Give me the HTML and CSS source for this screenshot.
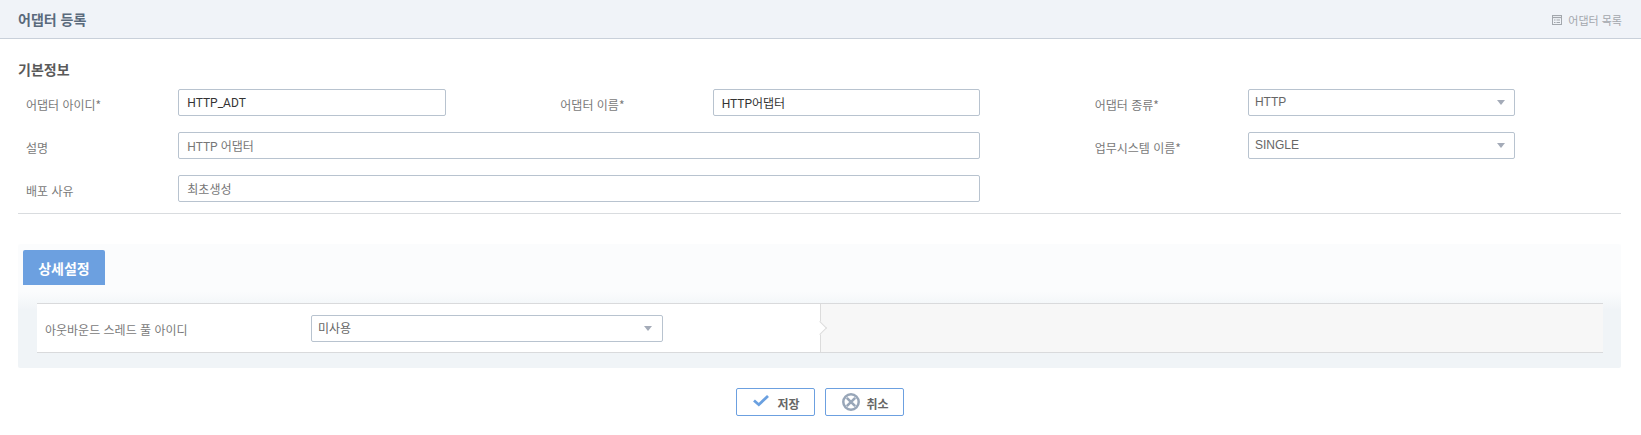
FILE: index.html
```html
<!DOCTYPE html>
<html lang="ko">
<head>
<meta charset="utf-8">
<title>어댑터 등록</title>
<link rel="stylesheet" href="styles.css">
</head>
<body>
<header class="page-head">
  <h1 class="page-title">어댑터 등록</h1>
  <a class="list-link" href="#">
    <svg class="list-icon" width="10" height="10" viewBox="0 0 10 10" aria-hidden="true">
      <rect x="0.5" y="0.5" width="9" height="9" fill="none" stroke="#a3a7ad"/>
      <path d="M0.5 2.5h9" stroke="#a3a7ad" stroke-width="1.2" fill="none"/>
      <path d="M2 5h1.5M2 7.5h1.5M4.5 5h3.5M4.5 7.5h3.5" stroke="#a3a7ad" fill="none"/>
    </svg>
    어댑터 목록
  </a>
</header>
<main class="content">
  <h2 class="section-title">기본정보</h2>
  <div class="form-grid">
    <div class="field"><label class="label">어댑터 아이디*</label><input class="input editable" value="HTTP_ADT"></div>
    <div class="field"><label class="label">어댑터 이름*</label><input class="input editable" value="HTTP어댑터"></div>
    <div class="field"><label class="label">어댑터 종류*</label><div class="select-wrap"><select class="select"><option>HTTP</option></select></div></div>
    <div class="field span-2"><label class="label">설명</label><input class="input" value="HTTP 어댑터"></div>
    <div class="field"><label class="label">업무시스템 이름*</label><div class="select-wrap"><select class="select"><option>SINGLE</option></select></div></div>
    <div class="field span-2"><label class="label">배포 사유</label><input class="input" value="최초생성"></div>
  </div>
  <section class="detail-panel">
    <div class="tab">상세설정</div>
    <div class="detail-row">
      <div class="detail-left">
        <label class="detail-label">아웃바운드 스레드 풀 아이디</label>
        <div class="select-wrap detail-select"><select class="select kr"><option>미사용</option></select></div>
      </div>
      <div class="detail-right"></div>
    </div>
  </section>
  <div class="actions">
    <button class="btn btn-save" type="button">
      <svg width="16" height="12" viewBox="0 0 16 12" aria-hidden="true"><path d="M1 5.5l4.8 4.2L15 1" fill="none" stroke="#6aa0e0" stroke-width="2.8"/></svg>
      <span class="btn-text">저장</span>
    </button>
    <button class="btn btn-cancel" type="button">
      <svg width="18" height="18" viewBox="0 0 18 18" aria-hidden="true"><circle cx="9" cy="9" r="7.7" fill="none" stroke="#98a6b8" stroke-width="2.5"/><path d="M4.8 4.8l8.4 8.4M13.2 4.8l-8.4 8.4" stroke="#98a6b8" stroke-width="2.6" fill="none"/></svg>
      <span class="btn-text">취소</span>
    </button>
  </div>
</main>
</body>
</html>
```
FILE: styles.css
```css
* { box-sizing: border-box; }
html, body { margin: 0; padding: 0; }
body {
  background: #fff;
  font-family: "Noto Sans CJK KR", "Noto Sans", Roboto, sans-serif;
  font-size: 12px;
  color: #666;
}
.page-head {
  height: 39px;
  background: #f0f3f8;
  border-bottom: 1px solid #c9d0da;
  display: flex;
  align-items: center;
  justify-content: space-between;
  padding: 0 19px 0 18px;
}
.page-title {
  margin: 0;
  font-size: 14px;
  font-weight: 700;
  color: #5a6a7c;
}
.list-link {
  display: flex;
  align-items: center;
  gap: 6px;
  padding-top: 2px;
  color: #a3a7ad;
  font-size: 11px;
  text-decoration: none;
}
.content { padding: 0 20px 0 18px; }
.section-title {
  margin: 20px 0 0;
  height: 20px;
  line-height: 20px;
  font-size: 14px;
  font-weight: 700;
  color: #5a5a5a;
}
.form-grid {
  display: grid;
  grid-template-columns: repeat(3, 534.33px);
  row-gap: 16px;
  margin-top: 10px;
  padding-bottom: 11px;
  border-bottom: 1px solid #d9dcdf;
}
.field { display: flex; align-items: center; }
.span-2 { grid-column: span 2; }
.form-grid .select-wrap { margin-left: 1px; }
.label {
  width: 160.3px;
  flex: none;
  padding: 3px 0 0 8px;
  color: #7a7a7a;
  font-size: 12px;
}
.input, .select-wrap { width: 267.5px; height: 27px; }
.span-2 .input { width: 802px; }
.input {
  border: 1px solid #b8c3cf;
  border-radius: 2px;
  padding: 0 8px;
  background: #fff;
  font: 12px Roboto, "Noto Sans CJK KR", sans-serif;
  color: #777;
  outline: none;
}
.input.editable { color: #333; }
.select-wrap { position: relative; }
.select-wrap::after {
  content: "";
  position: absolute;
  right: 10px;
  top: 11px;
  border-left: 4.5px solid transparent;
  border-right: 4.5px solid transparent;
  border-top: 5px solid #a4abb8;
  pointer-events: none;
}
.detail-select::after { right: 11px; }
.select {
  appearance: none;
  width: 100%;
  height: 100%;
  border: 1px solid #b8c3cf;
  border-radius: 2px;
  background: #fff;
  padding: 0 6px 2px;
  font: 12px "Liberation Sans", "Noto Sans CJK KR", sans-serif;
  color: #666;
  outline: none;
}
.select.kr { font-family: "Noto Sans CJK KR", sans-serif; }
.detail-panel {
  margin-top: 30px;
  height: 124px;
  border-radius: 2px;
  padding: 6px 18px 0 5px;
  background: linear-gradient(#fbfcfd 0, #fbfcfd 48px, #f0f4f7 66px);
}
.tab {
  width: 82px;
  height: 35px;
  background: #6ca0e0;
  border-radius: 2px 2px 0 0;
  color: #fff;
  font-size: 14px;
  font-weight: 700;
  display: flex;
  align-items: center;
  justify-content: center;
}
.detail-row {
  margin: 18px 0 0 14px;
  height: 50px;
  display: flex;
  border-top: 1px solid #d9dadc;
  border-bottom: 1px solid #d9dadc;
}
.detail-left {
  width: 784px;
  background: #fff;
  display: flex;
  align-items: center;
  padding-left: 8px;
  position: relative;
  border-right: 1px solid #dcdcdc;
}
.detail-left::after {
  content: "";
  position: absolute;
  right: -5px;
  top: 19px;
  width: 9px;
  height: 9px;
  background: #fff;
  border-top: 1px solid #dcdcdc;
  border-right: 1px solid #dcdcdc;
  transform: rotate(45deg);
}
.detail-label { width: 266px; flex: none; color: #7a7a7a; font-size: 12px; padding-top: 2px; }
.detail-select { width: 352px; }
.detail-right { flex: 1; background: #f7f7f7; }
.actions {
  display: flex;
  justify-content: center;
  gap: 10px;
  margin-top: 20px;
}
.btn {
  width: 79px;
  height: 28px;
  border: 1px solid #6ca0e0;
  border-radius: 2px;
  background: #fff;
  display: flex;
  align-items: center;
  justify-content: flex-start;
  padding: 0 0 0 16px;
  font: 700 12px "Noto Sans CJK KR", sans-serif;
  color: #666;
}
.btn-save { gap: 9px; }
.btn-cancel { gap: 7px; }
.btn-save svg { margin-bottom: 3px; }
.btn-text { padding-top: 3px; }
```
